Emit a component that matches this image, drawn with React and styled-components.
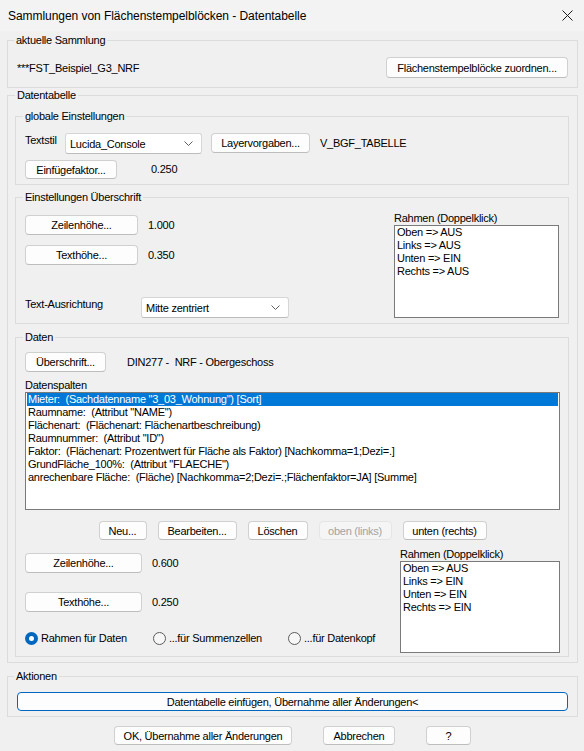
import React from 'react'
import styled, { createGlobalStyle } from 'styled-components'

const GlobalStyle = createGlobalStyle`
    html, body {
        margin: 0;
        padding: 0;
        background: #f0f0f0;
    }
    body {
        font-family: "Liberation Sans", Arial, sans-serif;
        font-size: 11px;
        letter-spacing: -0.25px;
        color: #000;
    }
`;

const Window = styled.div`
    width: 584px;
    height: 751px;
    background: #f0f0f0;
    display: flex;
    flex-direction: column;
    overflow: hidden;
`;

const TitleBar = styled.div`
    height: 31px;
    flex: none;
    box-sizing: border-box;
    display: flex;
    align-items: center;
    justify-content: space-between;
    padding: 0 11px 0 8px;
    background: #f3f3f3;
    font-size: 12px;
    letter-spacing: -0.05px;
`;

const Body = styled.div`
    padding: 0 6px 0 7px;
    display: flex;
    flex-direction: column;
`;

const Group = styled.fieldset`
    margin: ${p => p.$mt || 0}px 0 0 0;
    padding: ${p => p.$pad};
    border: 1px solid #dcdcdc;
    min-width: 0;
    box-sizing: border-box;
`;

const Legend = styled.legend`
    padding: 0 2px;
    margin-left: ${p => p.$ml || 0}px;
    line-height: 14px;
`;

const Row = styled.div`
    display: flex;
    align-items: ${p => p.$align || 'center'};
    justify-content: ${p => p.$justify || 'flex-start'};
    gap: ${p => p.$gap || 0}px;
    margin-top: ${p => p.$mt || 0}px;
`;

const Text = styled.span`
    line-height: ${p => p.$lh || 14}px;
    margin-left: ${p => p.$ml || 0}px;
    width: ${p => (p.$w ? p.$w + 'px' : 'auto')};
    flex: none;
    white-space: pre;
`;

const Button = styled.button`
    width: ${p => p.$w}px;
    height: ${p => p.$h || 20}px;
    margin-left: ${p => p.$ml || 0}px;
    flex: none;
    box-sizing: border-box;
    padding: 0;
    font: inherit;
    letter-spacing: inherit;
    color: ${p => (p.disabled ? '#a3a3a3' : '#000')};
    background: ${p => (p.disabled ? '#f5f5f5' : '#fdfdfd')};
    border: 1px solid ${p => (p.$primary ? '#0067c0' : p.disabled ? '#e5e5e5' : '#d0d0d0')};
    border-bottom-color: ${p => (p.$primary ? '#0067c0' : p.disabled ? '#e5e5e5' : '#bdbdbd')};
    border-radius: 4px;
`;

const WideButton = styled(Button)`
    width: 100%;
`;

const Combo = styled.div`
    width: ${p => p.$w}px;
    height: 21px;
    flex: none;
    box-sizing: border-box;
    display: flex;
    align-items: center;
    justify-content: space-between;
    padding: 0 8px 0 4px;
    background: #fff;
    border: 1px solid #d6d6d6;
    border-bottom-color: #bcbcbc;
    border-radius: 3px;
`;

const ListBox = styled.div`
    height: ${p => p.$h}px;
    box-sizing: border-box;
    background: #fff;
    border: 1px solid #7a7a7a;
    padding: 0 1px;
    overflow: hidden;
`;

const ListItem = styled.div`
    height: 13px;
    line-height: 13px;
    padding-left: 1px;
    white-space: pre;
    background: ${p => (p.$selected ? '#0078d7' : 'transparent')};
    color: ${p => (p.$selected ? '#fff' : '#000')};
`;

const SplitGrid = styled.div`
    display: grid;
    grid-template-columns: 1fr ${p => p.$right}px;
    margin-top: ${p => p.$mt || 0}px;
`;

const Column = styled.div`
    display: flex;
    flex-direction: column;
`;

const BottomRow = styled(Row)`
    margin-top: auto;
`;

const Radio = styled.label`
    display: flex;
    align-items: center;
    gap: 3px;
    line-height: 14px;
`;

const RadioCircle = styled.span`
    width: 13px;
    height: 13px;
    box-sizing: border-box;
    border-radius: 50%;
    display: inline-flex;
    align-items: center;
    justify-content: center;
    background: ${p => (p.$checked ? '#0067c0' : '#f7f7f7')};
    border: ${p => (p.$checked ? 'none' : '1px solid #5c5c5c')};

    &::after {
        content: '';
        width: 5px;
        height: 5px;
        border-radius: 50%;
        background: #fff;
        display: ${p => (p.$checked ? 'block' : 'none')};
    }
`;

const Chevron = () => (
    <svg width="9" height="5" viewBox="0 0 9 5">
        <polyline points="0.5,0.5 4.5,4.5 8.5,0.5" fill="none" stroke="#606060" strokeWidth="1" />
    </svg>
);

const CloseIcon = () => (
    <svg width="11" height="11" viewBox="0 0 11 11">
        <path d="M0.5 0.5 L10.5 10.5 M10.5 0.5 L0.5 10.5" stroke="#1c1c1c" strokeWidth="1" />
    </svg>
);

const datenspalten = [
    'Mieter:  (Sachdatenname "3_03_Wohnung") [Sort]',
    'Raumname:  (Attribut "NAME")',
    'Flächenart:  (Flächenart: Flächenartbeschreibung)',
    'Raumnummer:  (Attribut "ID")',
    'Faktor:  (Flächenart: Prozentwert für Fläche als Faktor) [Nachkomma=1;Dezi=.]',
    'GrundFläche_100%:  (Attribut "FLAECHE")',
    'anrechenbare Fläche:  (Fläche) [Nachkomma=2;Dezi=.;Flächenfaktor=JA] [Summe]',
];

const rahmenKopf = ['Oben => AUS', 'Links => AUS', 'Unten => EIN', 'Rechts => AUS'];
const rahmenDaten = ['Oben => AUS', 'Links => EIN', 'Unten => EIN', 'Rechts => EIN'];

export default function App() {
    return <Window>
        <GlobalStyle />
        <TitleBar>
            <span>Sammlungen von Flächenstempelblöcken - Datentabelle</span>
            <CloseIcon />
        </TitleBar>
        <Body>
            <Group $mt={2} $pad="10px 9px 9px 9px">
                <Legend $ml={-3}>aktuelle Sammlung</Legend>
                <Row $justify="space-between">
                    <Text>***FST_Beispiel_G3_NRF</Text>
                    <Button $w={182} $h={21}>Flächenstempelblöcke zuordnen...</Button>
                </Row>
            </Group>

            <Group $pad="7px 8px 5px 7px">
                <Legend>Datentabelle</Legend>

                <Group $pad="10px 9px 5px 9px">
                    <Legend $ml={-2}>globale Einstellungen</Legend>
                    <Row $align="flex-start">
                        <Text $w={40}>Textstil</Text>
                        <Combo $w={137}>
                            <span>Lucida_Console</span>
                            <Chevron />
                        </Combo>
                        <Button $w={99} $ml={9}>Layervorgaben...</Button>
                        <Text $ml={10} $lh={20}>V_BGF_TABELLE</Text>
                    </Row>
                    <Row $mt={6}>
                        <Button $w={92} $h={19}>Einfügefaktor...</Button>
                        <Text $ml={34} $lh={19}>0.250</Text>
                    </Row>
                </Group>

                <Group $mt={5} $pad="7px 9px 5px 9px">
                    <Legend $ml={-2}>Einstellungen Überschrift</Legend>
                    <SplitGrid $right={165}>
                        <Column>
                            <Row $mt={4}>
                                <Button $w={113}>Zeilenhöhe...</Button>
                                <Text $ml={10} $lh={20}>1.000</Text>
                            </Row>
                            <Row $mt={10}>
                                <Button $w={113}>Texthöhe...</Button>
                                <Text $ml={10} $lh={20}>0.350</Text>
                            </Row>
                            <BottomRow $align="flex-start">
                                <Text $w={116}>Text-Ausrichtung</Text>
                                <Combo $w={148}>
                                    <span>Mitte zentriert</span>
                                    <Chevron />
                                </Combo>
                            </BottomRow>
                        </Column>
                        <Column>
                            <Text>Rahmen (Doppelklick)</Text>
                            <ListBox $h={93}>
                                {rahmenKopf.map(r => <ListItem key={r}>{r}</ListItem>)}
                            </ListBox>
                        </Column>
                    </SplitGrid>
                </Group>

                <Group $mt={6} $pad="8px 8px 3px 9px">
                    <Legend $ml={-2}>Daten</Legend>
                    <Row>
                        <Button $w={81}>Überschrift...</Button>
                        <Text $ml={21} $lh={20}>DIN277 -  NRF - Obergeschoss</Text>
                    </Row>
                    <Row $mt={6}>
                        <Text>Datenspalten</Text>
                    </Row>
                    <ListBox $h={118}>
                        {datenspalten.map((d, i) => <ListItem key={d} $selected={i === 0}>{d}</ListItem>)}
                    </ListBox>
                    <Row $mt={11} $justify="center" $gap={11}>
                        <Button $w={48} $h={19}>Neu...</Button>
                        <Button $w={79} $h={19}>Bearbeiten...</Button>
                        <Button $w={60} $h={19}>Löschen</Button>
                        <Button $w={73} $h={19} disabled>oben (links)</Button>
                        <Button $w={84} $h={19}>unten (rechts)</Button>
                    </Row>
                    <SplitGrid $mt={7} $right={160}>
                        <Column>
                            <Row $mt={6}>
                                <Button $w={117}>Zeilenhöhe...</Button>
                                <Text $ml={10} $lh={20}>0.600</Text>
                            </Row>
                            <Row $mt={19}>
                                <Button $w={117}>Texthöhe...</Button>
                                <Text $ml={10} $lh={20}>0.250</Text>
                            </Row>
                            <Row $mt={19} $gap={26}>
                                <Radio><RadioCircle $checked />Rahmen für Daten</Radio>
                                <Radio><RadioCircle />...für Summenzellen</Radio>
                                <Radio><RadioCircle />...für Datenkopf</Radio>
                            </Row>
                        </Column>
                        <Column>
                            <Text>Rahmen (Doppelklick)</Text>
                            <ListBox $h={92}>
                                {rahmenDaten.map(r => <ListItem key={r}>{r}</ListItem>)}
                            </ListBox>
                        </Column>
                    </SplitGrid>
                </Group>
            </Group>

            <Group $mt={6} $pad="9px 9px 5px 9px">
                <Legend $ml={-3}>Aktionen</Legend>
                <WideButton $h={19} $primary>Datentabelle einfügen, Übernahme aller Änderungen&lt;</WideButton>
            </Group>

            <Row $mt={9} $justify="center" $gap={31}>
                <Button $w={178} $h={19}>OK, Übernahme aller Änderungen</Button>
                <Button $w={72} $h={19}>Abbrechen</Button>
                <Button $w={45} $h={19}>?</Button>
            </Row>
        </Body>
    </Window>
}
